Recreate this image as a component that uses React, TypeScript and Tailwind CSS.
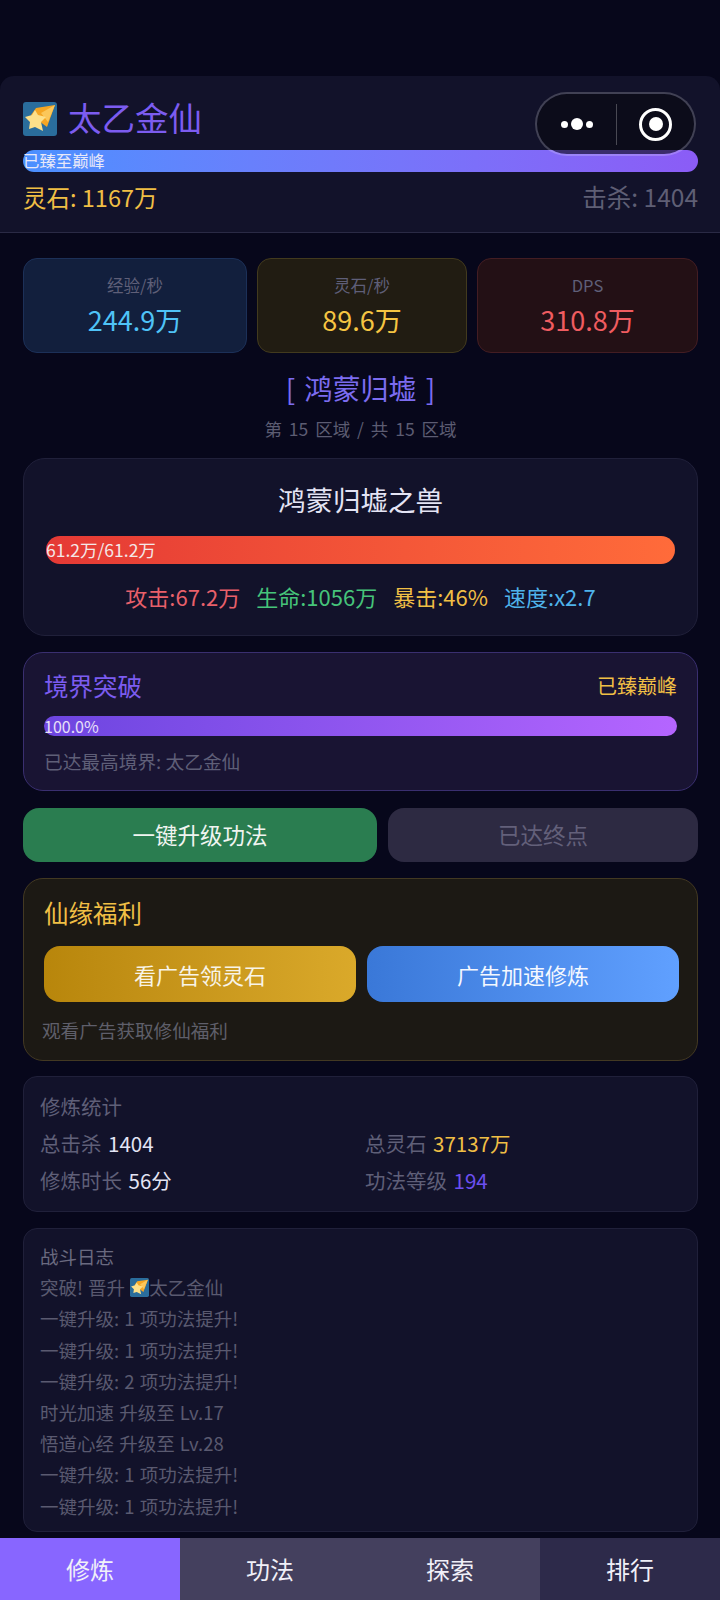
const font = '"Noto Sans CJK SC", sans-serif';

// the shooting star emoji
const StarIcon = ({ className }: { className: string }) => (
  <svg viewBox="0 0 34 34" className={className}>
    <rect width="34" height="34" rx="3" fill="#2a6d9c" />
    <path d="M32 3 L13 6 L8 13 L24 25 Z" fill="#f5a623" />
    <path d="M32 3 L18 11 L25 20 Z" fill="#fbc75a" />
    <path d="M12 8 L15 13 L23 15 L18 20 L20 29 L12 25 L6 27 L7 20 L2 15 L9 13 Z" fill="#fde08a" />
  </svg>
);

const StatBox = ({ label, value, box, valueColor }: { label: string; value: string; box: string; valueColor: string }) => (
  <div className={`flex h-[95px] flex-col items-center rounded-[14px] border pt-[13px] ${box}`}>
    <div className="text-[16.5px] leading-[26px] text-[#5f5f78]">{label}</div>
    <div className={`mt-[4px] text-[27px] leading-[36px] ${valueColor}`}>{value}</div>
  </div>
);

const logs = [
  "一键升级: 1 项功法提升!",
  "一键升级: 1 项功法提升!",
  "一键升级: 2 项功法提升!",
  "时光加速 升级至 Lv.17",
  "悟道心经 升级至 Lv.28",
  "一键升级: 1 项功法提升!",
  "一键升级: 1 项功法提升!",
];

export default function App() {
  return (
    <div className="relative h-[1600px] w-[720px] overflow-hidden bg-[#07071b]" style={{ fontFamily: font }}>
      {/* capsule of the mini program */}
      <div className="absolute left-[535px] top-[92px] z-10 flex h-[64px] w-[161px] items-center rounded-full border-2 border-[#ffffff33] bg-[#08081099] bg-clip-padding">
        <div className="flex w-[79px] items-center justify-center gap-[3px]">
          <span className="h-[7px] w-[7px] rounded-full bg-white" />
          <span className="h-[12px] w-[12px] rounded-full bg-white" />
          <span className="h-[7px] w-[7px] rounded-full bg-white" />
        </div>
        <div className="h-[41px] w-px bg-[#ffffff40]" />
        <div className="flex flex-1 items-center justify-center">
          <div className="flex h-[33px] w-[33px] items-center justify-center rounded-full border-[3.5px] border-white">
            <span className="h-[14px] w-[14px] rounded-full bg-white" />
          </div>
        </div>
      </div>

      <div className="h-[76px]" />

      <header className="h-[157px] rounded-t-[14px] border-b border-[#2a2a45] bg-[#12122a] pl-[23px] pr-[22px] pt-[23px]">
        <div className="flex h-[40px] items-center">
          <StarIcon className="h-[34px] w-[34px]" />
          <span className="ml-[11px] -mt-[5px] text-[33.5px] leading-[40px] text-[#7c5cf0]">太乙金仙</span>
        </div>
        <div className="mt-[11px] h-[22px] rounded-full bg-gradient-to-r from-[#4a90ff] to-[#8b5cf6] text-[16.4px] leading-[21px] text-[#e8e8f8]">
          已臻至巅峰
        </div>
        <div className="mt-[9px] flex items-center justify-between leading-[32px]">
          <span className="text-[23.5px] text-[#f0bf45]">灵石: 1167万</span>
          <span className="text-[24.5px] text-[#5f5f75]">击杀: 1404</span>
        </div>
      </header>

      <main className="pl-[23px] pr-[22px]">
        <div className="mt-[25px] grid grid-cols-[224px_210px_221px] gap-x-[10px]">
          <StatBox label="经验/秒" value="244.9万" box="border-[#1c3058] bg-[#121f3d]" valueColor="text-[#4fc3f7]" />
          <StatBox label="灵石/秒" value="89.6万" box="border-[#423a1e] bg-[#211c12]" valueColor="text-[#f5c542]" />
          <StatBox label="DPS" value="310.8万" box="border-[#431d23] bg-[#231015]" valueColor="text-[#ef5c60]" />
        </div>

        <div className="mt-[16px] text-center text-[28px] leading-[38px] text-[#7c6cf0] [word-spacing:3px]">[ 鸿蒙归墟 ]</div>
        <div className="mt-[9px] text-center text-[17.5px] leading-[26px] text-[#5c5c72] [word-spacing:3px]">第 15 区域 / 共 15 区域</div>

        <section className="mt-[16px] h-[178px] rounded-[22px] border border-[#20203a] bg-[#12122a] px-[22px] pt-[21px]">
          <div className="text-center text-[27.5px] leading-[38px] text-[#e4e4f4]">鸿蒙归墟之兽</div>
          <div className="mt-[18px] h-[28px] rounded-full bg-gradient-to-r from-[#e53935] to-[#ff6b3a] text-[17.5px] leading-[27px] text-[#f4e8e8]">
            61.2万/61.2万
          </div>
          <div className="mt-[17px] flex justify-center gap-[16px] text-[22px] leading-[30px]">
            <span className="text-[#e8606a]">攻击:67.2万</span>
            <span className="text-[#46c47a]">生命:1056万</span>
            <span className="text-[#f0bf45]">暴击:46%</span>
            <span className="text-[#4fb3ea]">速度:x2.7</span>
          </div>
        </section>

        <section className="mt-[16px] h-[139px] rounded-[20px] border border-[#3a2f70] bg-[#191433] px-[20px] pt-[16px]">
          <div className="flex items-center justify-between">
            <span className="text-[24.5px] leading-[34px] text-[#7c5cf0]">境界突破</span>
            <span className="text-[20px] leading-[34px] text-[#f0bf45]">已臻巅峰</span>
          </div>
          <div className="mt-[13px] h-[20px] rounded-full bg-gradient-to-r from-[#6d45e0] to-[#b565ff] text-[16px] leading-[20px] text-[#e8e0f8]">
            100.0%
          </div>
          <div className="mt-[12px] text-[18.7px] leading-[26px] text-[#5f5f78]">已达最高境界: 太乙金仙</div>
        </section>

        <div className="mt-[17px] flex gap-[11px]">
          <button className="h-[54px] w-[354px] rounded-[16px] bg-[#2a7d50] text-[22.5px] text-[#f0f4f0]">一键升级功法</button>
          <button className="h-[54px] flex-1 rounded-[16px] bg-[#2d2a42] text-[22.5px] text-[#63607a]">已达终点</button>
        </div>

        <section className="mt-[16px] h-[183px] rounded-[20px] border border-[#433922] bg-[#1c1914] pl-[20px] pr-[18px] pt-[16px]">
          <div className="text-[24.5px] leading-[36px] text-[#f0bf45]">仙缘福利</div>
          <div className="mt-[15px] flex gap-[11px]">
            <button className="h-[56px] flex-1 rounded-[16px] bg-gradient-to-r from-[#b8860b] to-[#daa92a] text-[22px] text-[#f8f4e8]">看广告领灵石</button>
            <button className="h-[56px] flex-1 rounded-[16px] bg-gradient-to-r from-[#3a78d8] to-[#60a0ff] text-[22px] text-[#f4f8ff]">广告加速修炼</button>
          </div>
          <div className="-ml-[2px] mt-[15px] text-[18.6px] leading-[26px] text-[#5f5f6a]">观看广告获取修仙福利</div>
        </section>

        <section className="mt-[15px] h-[136px] rounded-[14px] border border-[#20203a] bg-[#12122a] px-[16px] pt-[14px] text-[20.5px] leading-[30px]">
          <div className="text-[#5f5f78]">修炼统计</div>
          <div className="mt-[7px] grid grid-cols-[325px_1fr] gap-y-[7px] text-[#5f5f78]">
            <div>总击杀 <span className="ml-[2px] text-[#e4e4f4]">1404</span></div>
            <div>总灵石 <span className="ml-[2px] text-[#f0bf45]">37137万</span></div>
            <div>修炼时长 <span className="ml-[2px] text-[#e4e4f4]">56分</span></div>
            <div>功法等级 <span className="ml-[2px] text-[#6c4ff0]">194</span></div>
          </div>
        </section>

        <section className="mt-[16px] h-[304px] rounded-[14px] border border-[#20203a] bg-[#12122a] px-[16px] pt-[12px] text-[18.5px] leading-[31.2px] text-[#5a5a70] [word-spacing:1px]">
          <div className="text-[#6a6a80]">战斗日志</div>
          <div className="flex items-center">
            突破! 晋升&nbsp;<StarIcon className="h-[19px] w-[19px]" />太乙金仙
          </div>
          {logs.map((l, i) => (
            <div key={i}>{l}</div>
          ))}
        </section>
      </main>

      <nav className="absolute bottom-0 left-0 grid h-[62px] w-[720px] grid-cols-4 text-center text-[24px] leading-[62px] text-[#f0f0f8]">
        <div className="bg-[#8866ff]">修炼</div>
        <div className="bg-[#44405e]">功法</div>
        <div className="bg-[#44405e]">探索</div>
        <div className="bg-[#2d2a4a]">排行</div>
      </nav>
    </div>
  );
}
